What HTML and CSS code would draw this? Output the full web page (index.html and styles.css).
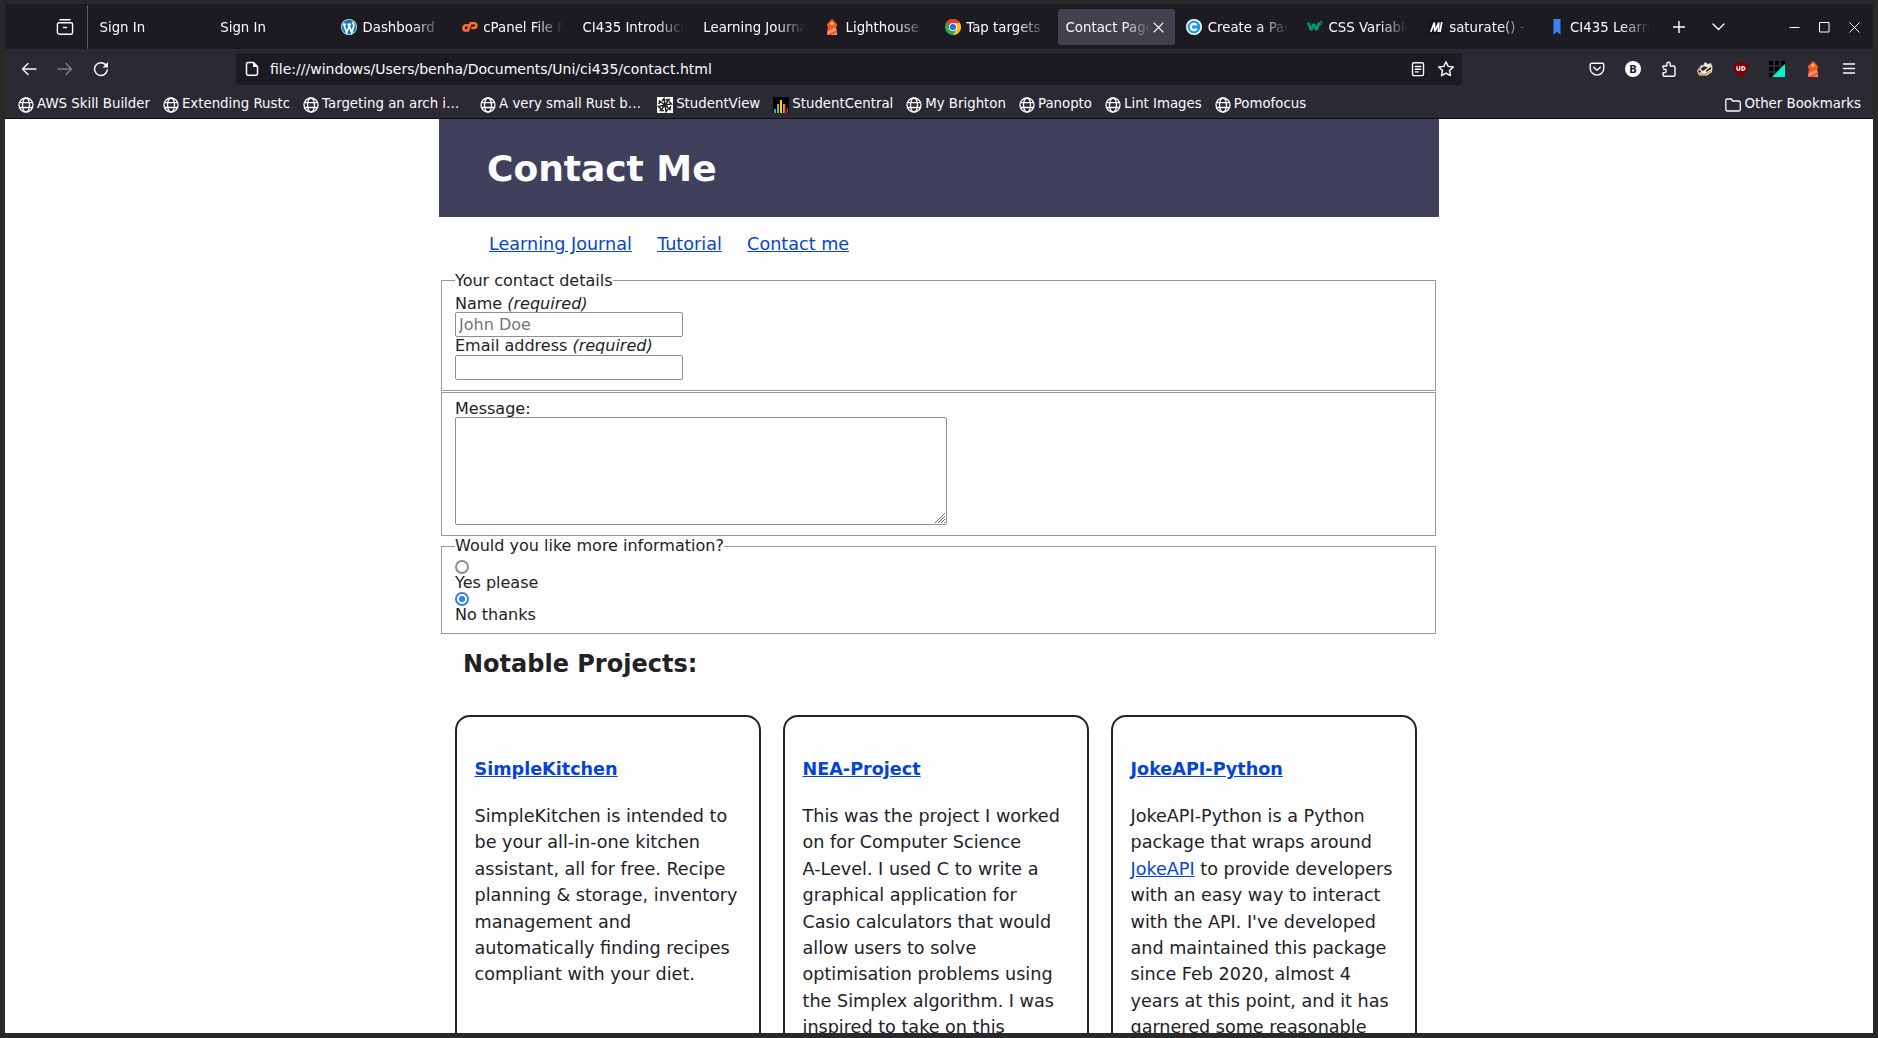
FILE: index.html
```html
<!DOCTYPE html>
<html lang="en">
<head>
<meta charset="utf-8">
<title>Contact Page</title>
<link rel="stylesheet" href="styles.css">
</head>
<body>
<svg class="defs" width="0" height="0">
  <symbol id="globe" viewBox="0 0 16 16"><g fill="none" stroke="#fbfbfe" stroke-width="1.300"><circle cx="8" cy="8" r="7"/><ellipse cx="8" cy="8" rx="3.500" ry="7"/><path d="M1.400 5.700h13.200M1.400 10.500h13.200"/></g></symbol>
  <symbol id="lighthouse" viewBox="0 0 16 16"><path fill="#f4582c" d="M4 4.500L5 3l3-3 3 3 1 1.500H13V7.500h-1l1 6.500V16H3v-2l1-6.500H3V4.500z"/><path fill="#ff9170" d="M4 12l8-3.500.5 3L3 15.500zM8 16l5-2.500V16z"/><circle cx="8" cy="4.500" r="1.700" fill="#ffcd2e"/></symbol>
</svg>
<div class="window">
  <header class="tabbar">
    <div class="recent"><svg width="18" height="18" viewBox="0 0 18 18" fill="none" stroke="#fbfbfe" stroke-width="1.400" stroke-linecap="round"><path d="M4 1.700h10M3 4.800h12a1.600 1.600 0 0 1 1.600 1.600v7.800a2 2 0 0 1-2 2H3.400a2 2 0 0 1-2-2V6.400A1.600 1.600 0 0 1 3 4.800zM7.500 9.500h3"/></svg></div>
    <nav class="tabs">
      <div class="tab"><span>Sign In</span></div>
      <div class="tab"><span>Sign In</span></div>
      <div class="tab"><svg class="fav" viewBox="0 0 16 16"><circle cx="8" cy="8" r="8" fill="#cfe6f2"/><circle cx="8" cy="8" r="7.200" fill="#0c7cb0"/><path fill="none" stroke="#fff" stroke-width="1.700" d="M1.800 5.300h3.400M6.500 5.300h3.600M2.800 5.500l3 8L8 7.500 7.300 5.500M7.800 5.500l2.900 8 2-6.300c.6-2-1.300-2.500-1-4.200"/></svg><span>Dashboard</span></div>
      <div class="tab"><svg class="fav" viewBox="0 0 16 16" fill="none" stroke="#ff6c2c" stroke-width="2.600" stroke-linecap="round" stroke-linejoin="round"><path d="M5.800 6.300H4a2.600 2.600 0 0 0 0 5.200h2L8.500 4.200H12a2.300 2.300 0 0 1 0 4.800h-1.500"/></svg><span>cPanel File Manager</span></div>
      <div class="tab"><span>CI435 Introduction</span></div>
      <div class="tab"><span>Learning Journal</span></div>
      <div class="tab"><svg class="fav"><use href="#lighthouse"/></svg><span>Lighthouse</span></div>
      <div class="tab"><svg class="fav" viewBox="0 0 16 16"><circle cx="8" cy="8" r="8" fill="#34a853"/><path d="M8 8L1.070 4A8 8 0 0 1 14.930 4z" fill="#ea3a2e"/><path d="M8 4h6.930A8 8 0 0 1 8 16l3.500-6z" fill="#fbc116"/><circle cx="8" cy="8" r="4" fill="#fff"/><circle cx="8" cy="8" r="3.100" fill="#1a73e8"/></svg><span>Tap targets</span></div>
      <div class="tab active"><span>Contact Page</span><svg class="close" viewBox="0 0 10 10" stroke="#fbfbfe" stroke-width="1.200" stroke-linecap="round"><path d="M1 1l8 8M9 1L1 9"/></svg></div>
      <div class="tab"><svg class="fav" viewBox="0 0 16 16"><circle cx="8" cy="8" r="8" fill="#fff"/><circle cx="8" cy="8" r="6.400" fill="#159bf3"/><path d="M10.500 6.300A3.100 3.100 0 1 0 10.500 9.700" fill="none" stroke="#fff" stroke-width="2.300"/></svg><span>Create a Page</span></div>
      <div class="tab"><svg class="fav" viewBox="0 0 16 16" fill="none" stroke="#059862"><path stroke-width="2.900" stroke-linejoin="bevel" d="M1 3.500l3.200 7.500 2.600-6 2.600 6 3-7.500"/><path stroke-width="1" d="M13 2.500h2l-1 1.300c1.500 0 1.300 2.200-1 1.700"/></svg><span>CSS Variables</span></div>
      <div class="tab"><svg class="fav" viewBox="0 0 16 16"><path fill="#15141a" d="M0 0h16v16H0z"/><path fill="none" stroke="#fff" stroke-width="1.700" stroke-linejoin="bevel" d="M2.800 13L6.300 3.500 6.800 12.500 10.800 3.500 10.300 13M13.800 3l-1.800 10"/></svg><span>saturate() - CSS</span></div>
      <div class="tab"><svg class="fav" viewBox="0 0 16 16"><path fill="#3b82f6" d="M4.500 0h7v16L8 12.500 4.500 16z"/></svg><span>CI435 Learning</span></div>
    </nav>
    <div class="tabtools">
      <svg width="12" height="12" viewBox="0 0 12 12" stroke="#fbfbfe" stroke-width="1.400"><path d="M6 0v12M0 6h12"/></svg>
      <svg width="13" height="8" viewBox="0 0 13 8" fill="none" stroke="#fbfbfe" stroke-width="1.400" stroke-linecap="round"><path d="M1 1l5.500 5.500L12 1"/></svg>
    </div>
    <div class="winbtns">
      <svg viewBox="0 0 11 11" fill="none" stroke="#fff"><path d="M.5 5.500h10"/></svg>
      <svg viewBox="0 0 11 11" fill="none" stroke="#fff"><path d="M.5.5h9.500v9.500H.5z"/></svg>
      <svg viewBox="0 0 11 11" fill="none" stroke="#fff"><path d="M.5.500l10 10M10.500.500l-10 10"/></svg>
    </div>
  </header>
  <div class="navbar">
    <div class="history">
      <svg viewBox="0 0 16 16" fill="none" stroke="#fbfbfe" stroke-width="1.400" stroke-linecap="round" stroke-linejoin="round"><path d="M15 8H1.500M7 2.500L1.500 8 7 13.500"/></svg>
      <svg class="dim" viewBox="0 0 16 16" fill="none" stroke="#fbfbfe" stroke-width="1.400" stroke-linecap="round" stroke-linejoin="round"><path d="M1 8h13.500M9 2.500L14.500 8 9 13.500"/></svg>
      <svg viewBox="0 0 16 16" fill="none" stroke="#fbfbfe" stroke-width="1.500" stroke-linecap="round"><path d="M14.300 9A6.400 6.400 0 1 1 12.500 3.600"/><path fill="#fbfbfe" stroke="none" d="M15 1v5.500H9.500z"/></svg>
    </div>
    <div class="urlbar">
      <svg class="page" width="14" height="16" viewBox="0 0 14 16" fill="none" stroke="#fbfbfe" stroke-width="1.500" stroke-linejoin="round"><path d="M3 1.500h5.500L12.500 5.500v7.200a1.500 1.500 0 0 1-1.500 1.500H3a1.500 1.500 0 0 1-1.500-1.500V3A1.500 1.500 0 0 1 3 1.500z"/><path fill="#fbfbfe" stroke="none" d="M8 1v5h5z"/></svg>
      <span class="url">file:///windows/Users/benha/Documents/Uni/ci435/contact.html</span>
      <svg class="reader" width="14" height="16" viewBox="0 0 14 16" fill="none" stroke="#fbfbfe" stroke-width="1.400" stroke-linecap="round"><rect x="1.500" y="1.800" width="11" height="12.800" rx="1.500"/><path d="M4.300 5.500h5.400M4.300 8.200h5.400M4.300 10.900h3"/></svg>
      <svg width="18" height="18" viewBox="0 0 18 18" fill="none" stroke="#fbfbfe" stroke-width="1.400" stroke-linejoin="round"><path d="M9 1.700l2.200 4.700 5.100.6-3.800 3.500 1 5.100L9 13.100l-4.500 2.500 1-5.100L1.700 7l5.100-.6z"/></svg>
    </div>
    <div class="extensions">
      <svg viewBox="0 0 16 16" fill="none" stroke="#fbfbfe" stroke-width="1.400" stroke-linecap="round" stroke-linejoin="round"><path d="M2.700 2.200h10.600A1.500 1.500 0 0 1 14.800 3.700v3.600a6.800 6.800 0 0 1-13.600 0V3.700a1.500 1.500 0 0 1 1.500-1.500z"/><path d="M4.700 6.200L8 9.300l3.300-3.100"/></svg>
      <svg viewBox="0 0 16 16"><circle cx="8" cy="8" r="8" fill="#fff"/><text class="badge-b" x="8" y="11.700" text-anchor="middle">B</text></svg>
      <svg viewBox="0 0 16 16" fill="none" stroke="#fbfbfe" stroke-width="1.400" stroke-linejoin="round"><path d="M2 7V5h3.800V3a1.700 1.700 0 0 1 3.400 0v2h3.300a1.500 1.500 0 0 1 1.500 1.500v7.200a1.500 1.500 0 0 1-1.500 1.500h-9A1.500 1.500 0 0 1 2 13.700v-2h1.500a1.700 1.700 0 0 0 0-3.400H2"/></svg>
      <svg viewBox="0 0 16 16"><path fill="#e9dcc2" d="M0 10l4-6 2 .5L8 1l3 2 3-1 1.500 4-.5 5-5 3.500H2z"/><path fill="#222" d="M3.500 8l5-4 2.500 2-5 4zM9 9.500l5-3.500v2L9.500 11zM1 10l2-1 1 2-2 1z"/><path fill="#fff" d="M6 4.500l3-1 4 2-4 .5zM4 11l5-1-1 3z"/><path fill="none" stroke="#b9863e" d="M2 13h7l5-3M4 5L2 8"/></svg>
      <svg viewBox="0 0 16 16"><path fill="#800000" d="M8 0c2 1.700 4 2.200 7 2.200 0 7-1 10.300-7 13.800C2 12.500 1 9.200 1 2.200 4 2.200 6 1.700 8 0z"/><path fill="none" stroke="#fff" stroke-width="1.300" d="M4 5.300v3c0 1.300 2.800 1.300 2.800 0v-3M9 5.300v4c3.800.3 3.800-4 0-3.700"/></svg>
      <svg viewBox="0 0 16 16"><path fill="#000" d="M0 0h4v4H0zM6 0h4v4H6zM12 0h4v4h-4zM0 6h4v4H0zM6 6h4v4H6zM0 12h4v4H0z"/><path fill="#00f5c8" d="M16 3v13H3z"/></svg>
      <svg><use href="#lighthouse"/></svg>
      <svg viewBox="0 0 16 16" fill="none" stroke="#fbfbfe" stroke-width="1.400" stroke-linecap="round"><path d="M2.500 3h11M2.500 7.500h11M2.500 12h11"/></svg>
    </div>
  </div>
  <div class="bookmarks">
    <div class="bm"><svg><use href="#globe"/></svg>AWS Skill Builder</div>
    <div class="bm"><svg><use href="#globe"/></svg>Extending Rustc</div>
    <div class="bm long"><svg><use href="#globe"/></svg>Targeting an arch i…</div>
    <div class="bm rust"><svg><use href="#globe"/></svg>A very small Rust b…</div>
    <div class="bm"><svg viewBox="0 0 16 16"><path fill="#fff" d="M0 0h16v16H0z"/><g fill="none" stroke="#222" stroke-width="1.500"><path d="M8 8L7 1.500 5 4M8 8l4-5.500-3.500.5M8 8l6.500-1L12 4.500M8 8l5 4.500.5-3.500M8 8l1 6.500 2-2.500M8 8l-4.500 5.500 3.500 0M8 8l-6.500 1.500L4 12M8 8L2.500 4 2 7"/></g></svg>StudentView</div>
    <div class="bm"><svg viewBox="0 0 16 16"><path fill="#000" d="M0 0h16v16H0z"/><path fill="#18b7c9" d="M1 12h2v4H1z"/><path fill="#79c142" d="M4 7h2v9H4z"/><path fill="#ffd400" d="M7 3h2v13H7z"/><path fill="#f7941d" d="M10 7h2v9h-2z"/><path fill="#d9333f" d="M11.500 8h1v8h-1z"/><path fill="#7b3fa0" d="M13.500 11h1.500v5h-1.500z"/></svg>StudentCentral</div>
    <div class="bm"><svg><use href="#globe"/></svg>My Brighton</div>
    <div class="bm"><svg><use href="#globe"/></svg>Panopto</div>
    <div class="bm"><svg><use href="#globe"/></svg>Lint Images</div>
    <div class="bm"><svg><use href="#globe"/></svg>Pomofocus</div>
    <div class="bm other"><svg viewBox="0 0 16 16" fill="none" stroke="#fbfbfe" stroke-width="1.300" stroke-linejoin="round"><path d="M2.300 2h4l1.500 2h6a1.500 1.500 0 0 1 1.500 1.500v7a1.500 1.500 0 0 1-1.500 1.500H2.300a1.500 1.500 0 0 1-1.500-1.500V3.500a1.500 1.500 0 0 1 1.500-1.500z"/></svg>Other Bookmarks</div>
  </div>
  <main class="viewport">
    <div class="content">
      <div class="banner"><h1>Contact Me</h1></div>
      <nav class="links"><a href="#">Learning Journal</a><a href="#">Tutorial</a><a href="#">Contact me</a></nav>
      <form>
        <fieldset class="details">
          <legend>Your contact details</legend>
          <label class="first" for="name">Name <em>(required)</em></label>
          <input class="field" id="name" type="text" placeholder="John Doe">
          <label for="email">Email address <em>(required)</em></label>
          <input class="field" id="email" type="email">
        </fieldset>
        <fieldset class="message">
          <label class="first" for="msg">Message:</label>
          <div class="area"><textarea id="msg"></textarea><svg class="grip" viewBox="0 0 10 10" stroke="#666" stroke-width="1"><path d="M0 10L10 0M3 10l7-7M6 10l4-4M9 10l1-1"/></svg></div>
        </fieldset>
        <fieldset class="info">
          <legend>Would you like more information?</legend>
          <input class="radio" type="radio" name="info" id="yes"><label for="yes">Yes please</label>
          <input class="radio" type="radio" name="info" id="no" checked><label for="no">No thanks</label>
        </fieldset>
      </form>
      <h2>Notable Projects:</h2>
      <section class="cards">
        <article><h3><a href="#">SimpleKitchen</a></h3><p>SimpleKitchen is intended to<br>be your all-in-one kitchen<br>assistant, all for free. Recipe<br>planning &amp; storage, inventory<br>management and<br>automatically finding recipes<br>compliant with your diet.</p></article>
        <article><h3><a href="#">NEA-Project</a></h3><p>This was the project I worked<br>on for Computer Science<br>A-Level. I used C to write a<br>graphical application for<br>Casio calculators that would<br>allow users to solve<br>optimisation problems using<br>the Simplex algorithm. I was<br>inspired to take on this</p></article>
        <article><h3><a href="#">JokeAPI-Python</a></h3><p>JokeAPI-Python is a Python<br>package that wraps around<br><a href="#">JokeAPI</a> to provide developers<br>with an easy way to interact<br>with the API. I've developed<br>and maintained this package<br>since Feb 2020, almost 4<br>years at this point, and it has<br>garnered some reasonable</p></article>
      </section>
    </div>
  </main>
</div>
</body>
</html>
```

FILE: styles.css
```css
* { box-sizing: border-box; }
body { margin: 0; font-family: "DejaVu Sans", sans-serif; background: #292929; overflow: hidden; }
svg { display: block; flex: none; }
.defs { position: absolute; }
.window { width: 1878px; height: 1038px; border: 5px solid #292929; border-top-width: 4px; display: flex; flex-direction: column; overflow: hidden; color: #fbfbfe; font-size: 13.33px; }

.tabbar { height: 45px; background: #1c1b22; display: flex; align-items: center; padding-top: 1px; flex: none; }
.recent { width: 83px; height: 44px; border-right: 1px solid #5b5a63; display: flex; align-items: center; padding-left: 51px; }
.tabs { display: flex; gap: 4px; padding-left: 4px; width: 1574px; flex: none; }
.tab { width: 116.75px; height: 36px; flex: none; padding: 0 8px 0 7.5px; display: flex; align-items: center; gap: 5.5px; border-radius: 3px; }
.tab span { flex: 1; min-width: 0; overflow: hidden; white-space: nowrap; line-height: 20px; padding-top: 1px; mask-image: linear-gradient(to left, transparent, #000 28px); }
.active { background: #42414d; gap: 2px; padding-right: 11px; }
.fav { width: 16px; height: 16px; }
.close { width: 11px; height: 11px; }
.tabtools { display: flex; align-items: center; gap: 27px; margin-left: 11px; }
.winbtns { display: flex; gap: 19px; margin-left: auto; padding-right: 13px; }
.winbtns svg { width: 11px; height: 11px; }

.navbar { height: 40px; background: #2b2a33; display: flex; align-items: center; flex: none; }
.history { display: flex; gap: 20px; width: 231px; padding-left: 16px; }
.history svg, .extensions svg { width: 16px; height: 16px; }
.dim { opacity: .4; }
.urlbar { width: 1226px; height: 32px; border-radius: 4px; background: #1c1b22; display: flex; align-items: center; padding: 0 7px 0 9px; }
.url { margin-left: 11px; flex: 1; font-size: 14px; }
.reader { margin-right: 12px; }
.extensions { display: flex; gap: 20px; margin-left: auto; padding-right: 16px; }
.badge-b { font: bold 10px "DejaVu Sans", sans-serif; fill: #1c1b22; }

.bookmarks { height: 30px; background: #2b2a33; border-bottom: 1px solid #0c0c0d; display: flex; gap: 13px; padding: 1px 12px 0 13px; flex: none; align-items: center; white-space: nowrap; }
.bm { display: flex; align-items: center; gap: 3px; line-height: 18px; }
.bm svg { width: 16px; height: 16px; margin-top: 1px; }
.long { width: 164px; }
.rust { padding-right: 3px; }
.other { margin-left: auto; }

.viewport { flex: 1; min-height: 0; overflow: hidden; background: #fefefe; color: #222226; font-size: 16px; }
.content { width: 1000px; margin: 0 auto; }
.banner { height: 98px; background: #40405c; display: flex; align-items: center; padding: 1px 0 0 48px; }
h1 { margin: 0; font-size: 36px; color: #fbfdff; }
a { color: #0645d2; }
.links { display: flex; gap: 25.3px; padding: 14px 50px 0; height: 53px; line-height: 27px; font-size: 17.6px; }
form { padding: 0 3px 0 2px; }
fieldset { margin: 0; border: 1px solid #9a9a9a; padding: 0 13px; min-width: 0; }
fieldset label { display: block; height: 18px; line-height: 18px; }
fieldset .first { padding-top: 1px; }
legend { padding: 0; line-height: 20px; }
.details { padding: 4px 13px 10px; margin-bottom: 1px; }
.details legend { padding-top: 2px; line-height: 18px; }
.message { padding: 6px 13px 10px; }
.info { padding: 4px 13px 9px; margin-bottom: 1px; }
.field { display: block; width: 228px; height: 25px; border: 1px solid #8f8f8f; border-radius: 2px; background: #fff; padding: 0 3px; font: 16px "DejaVu Sans", sans-serif; }
.field::placeholder { color: #757575; opacity: 1; }
.area { position: relative; width: 492px; height: 108px; }
.area textarea { display: block; width: 100%; height: 100%; border: 1px solid #8f8f8f; border-radius: 2px; resize: none; background: #fff; }
.grip { position: absolute; right: 2px; bottom: 2px; width: 10px; height: 10px; }
.radio { appearance: none; display: block; width: 14px; height: 14px; margin: 0; border: 2px solid #8f8f8f; border-radius: 50%; background: #fff; }
.radio:checked { border-color: #3584e4; background: radial-gradient(circle, #3584e4 2.800px, #fff 3.500px); }
h2 { margin: 0; padding: 15px 0 0 24px; font-size: 24px; line-height: 28px; height: 80px; }
.cards { display: grid; grid-template-columns: repeat(3, 306px); gap: 22px; padding-left: 16px; height: 500px; }
article { border: 2px solid #222226; border-radius: 15px; padding: 39px 17.500px; font-size: 17.6px; line-height: 26.4px; white-space: nowrap; }
h3 { margin: 0 0 21px; font-size: 17.6px; line-height: 26px; }
p { margin: 0; }
```
